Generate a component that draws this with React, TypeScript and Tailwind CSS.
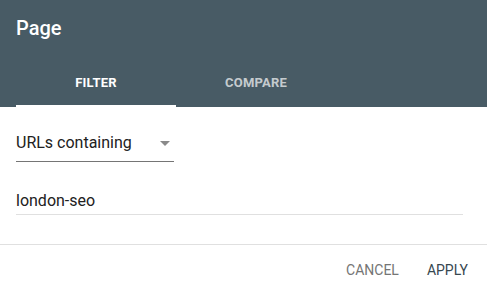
import { useState } from 'react'

const TABS = ['Filter', 'Compare'] as const

export default function App() {
  const [tab, setTab] = useState<string>('Filter')
  const [query, setQuery] = useState('london-seo')

  return (
    <div className="w-[487px] h-[296px] bg-white font-['Roboto',sans-serif] overflow-hidden">
      {/* Header */}
      <div className="h-[107px] bg-[#485b65] flex flex-col">
        <h2 className="pt-[14px] px-4 text-[20px] leading-7 font-medium text-white">Page</h2>
        <div className="mt-auto flex px-4">
          {TABS.map((t) => (
            <button
              key={t}
              onClick={() => setTab(t)}
              className={`w-40 h-12 flex flex-col text-[13px] font-bold uppercase tracking-[0.2px] ${
                tab === t ? 'text-white' : 'text-white/70'
              }`}
            >
              <span className="flex-1 flex items-center justify-center pt-[1px]">{t}</span>
              <span className={`h-[2px] w-full ${tab === t ? 'bg-white' : 'bg-transparent'}`} />
            </button>
          ))}
        </div>
      </div>

      {/* Body */}
      <div className="px-4">
        <div className="mt-[24px] w-[158px] border-b border-[#757575] pb-[6px] flex items-center justify-between">
          <span className="text-[16px] leading-6 text-[#212121]">URLs containing</span>
          <svg width="10" height="5" viewBox="0 0 10 5" className="mr-[4px]">
            <path d="M0 0h10L5 5z" fill="#8a8a8a" />
          </svg>
        </div>
        <input
          value={query}
          onChange={(e) => setQuery(e.target.value)}
          className="mt-[27px] w-[447px] block text-[16px] leading-6 text-[#212121] pb-[1px] border-b border-[#e0e0e0] outline-none"
        />
      </div>

      <div className="mt-[29px] border-t border-[#e0e0e0] h-[51px] flex items-center justify-end pr-[19px] gap-[28px] text-[14px]">
        <button className="uppercase text-[#757575]">Cancel</button>
        <button className="uppercase text-[#37474f]">Apply</button>
      </div>
    </div>
  )
}
